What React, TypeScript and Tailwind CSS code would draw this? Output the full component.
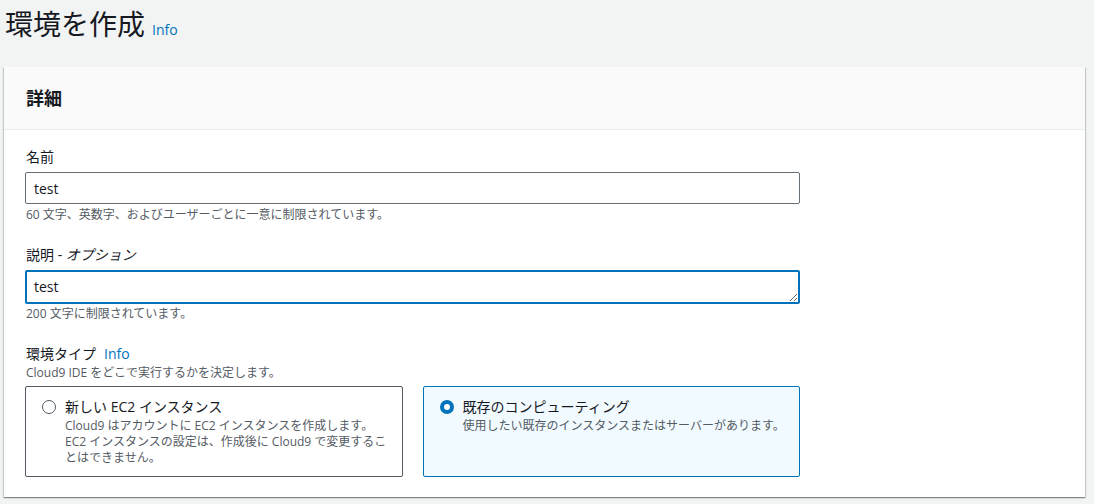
import { useState } from 'react';

const font = "font-['Open_Sans','Noto_Sans_CJK_JP',sans-serif]";

interface TileProps {
  title: string;
  description: string;
  selected: boolean;
  onSelect: () => void;
}

function RadioTile({ title, description, selected, onSelect }: TileProps) {
  return (
    <button
      type="button"
      onClick={onSelect}
      className={`flex items-start text-left rounded-[2px] border pl-4 pr-[14px] pt-[9px] pb-3 h-[91px] ${
        selected ? 'bg-[#f1faff] border-[#0073bb]' : 'bg-white border-[#545b64]'
      }`}
    >
      {/* Radio */}
      <span className="mt-[4px] mr-[9px] shrink-0">
        {selected ? (
          <span className="flex items-center justify-center w-[14px] h-[14px] rounded-full bg-[#0073bb]">
            <span className="w-[6px] h-[6px] rounded-full bg-white" />
          </span>
        ) : (
          <span className="block w-[14px] h-[14px] rounded-full border-[1.5px] border-[#545b64] bg-white" />
        )}
      </span>
      <span className="flex flex-col">
        <span className="text-[14px] leading-[22px] text-[#16191f]">{title}</span>
        <span className="text-[12px] leading-[16px] text-[#545b64]">{description}</span>
      </span>
    </button>
  );
}

export default function App() {
  const [name, setName] = useState('test');
  const [desc, setDesc] = useState('test');
  const [envType, setEnvType] = useState('existing');

  return (
    <div className={`min-h-[504px] bg-[#f2f3f3] pl-[4px] pr-[9px] ${font}`}>
      {/* Page header */}
      <div className="flex items-baseline pt-[4px] pl-[1px] h-[67px]">
        <h1 className="text-[28px] leading-[40px] text-[#16191f] font-normal">環境を作成</h1>
        <a className="ml-[7px] text-[14px] font-medium text-[#0073bb]">Info</a>
      </div>

      {/* Card */}
      <div className="bg-white shadow-[0_1px_1px_0_rgba(0,28,36,0.3),1px_1px_1px_0_rgba(0,28,36,0.15),-1px_1px_1px_0_rgba(0,28,36,0.15)]">
        <div className="h-[63px] bg-[#fafafa] border-b border-[#eaeded] flex items-center pl-[22px] pt-[1px]">
          <h2 className="text-[18px] font-bold text-[#16191f]">詳細</h2>
        </div>

        <div className="pl-[21px] pt-[16px] pb-[20px]">
          <div className="w-[775px]">
            {/* Name */}
            <label className="block text-[14px] leading-[22px] text-[#16191f] pl-[1px]">名前</label>
            <input
              value={name}
              onChange={(e) => setName(e.target.value)}
              className="mt-[4px] w-full h-[32px] border border-[#687078] rounded-[2px] px-[8px] text-[14px] font-medium text-[#16191f] outline-none"
            />
            <p className="mt-[3px] text-[12px] leading-[16px] text-[#545b64] pl-[1px]">
              60 文字、英数字、およびユーザーごとに一意に制限されています。
            </p>

            {/* Description */}
            <label className="block mt-[21px] text-[14px] leading-[22px] text-[#16191f] pl-[1px]">
              説明 - <i>オプション</i>
            </label>
            <textarea
              value={desc}
              onChange={(e) => setDesc(e.target.value)}
              rows={1}
              className="block mt-[4px] w-full h-[34px] border-2 border-[#0073bb] rounded-[2px] px-[7px] py-[4px] text-[14px] leading-[22px] font-medium text-[#16191f] outline-none"
            />
            <p className="mt-[2px] text-[12px] leading-[16px] text-[#545b64] pl-[1px]">200 文字に制限されています。</p>

            {/* Env type */}
            <div className="mt-[21px] flex items-baseline pl-[1px]">
              <span className="text-[14px] leading-[22px] text-[#16191f]">環境タイプ</span>
              <a className="ml-[8px] text-[14px] font-medium text-[#0073bb]">Info</a>
            </div>
            <p className="text-[12px] leading-[16px] text-[#545b64] pl-[1px]">Cloud9 IDE をどこで実行するかを決定します。</p>

            <div className="mt-[5px] grid grid-cols-2 gap-5">
              <RadioTile
                title="新しい EC2 インスタンス"
                description="Cloud9 はアカウントに EC2 インスタンスを作成します。EC2 インスタンスの設定は、作成後に Cloud9 で変更することはできません。"
                selected={envType === 'new'}
                onSelect={() => setEnvType('new')}
              />
              <RadioTile
                title="既存のコンピューティング"
                description="使用したい既存のインスタンスまたはサーバーがあります。"
                selected={envType === 'existing'}
                onSelect={() => setEnvType('existing')}
              />
            </div>
          </div>
        </div>
      </div>
    </div>
  );
}
